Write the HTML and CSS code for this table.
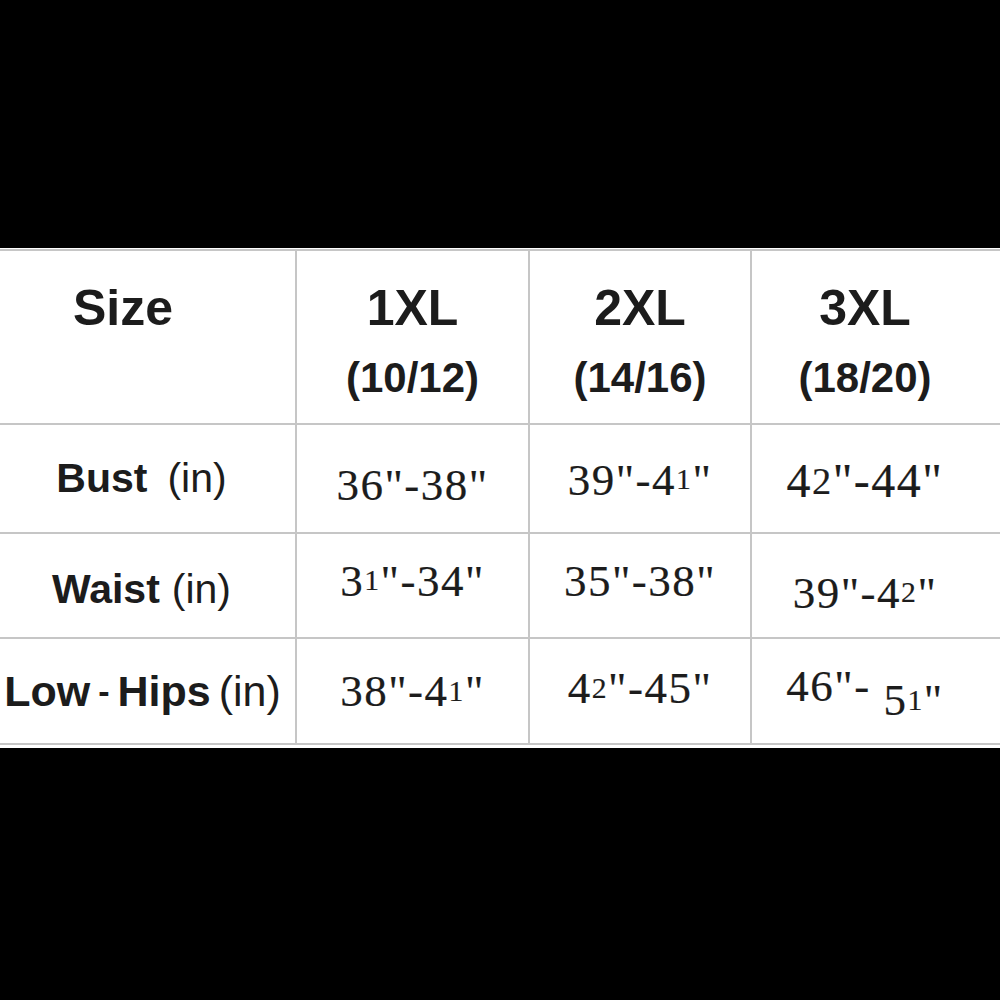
FILE: index.html
```html
<!DOCTYPE html>
<html>
<head>
<meta charset="utf-8">
<link rel="stylesheet" href="styles.css">
</head>
<body>
<div class="chart">
  <div class="cell head size-head"><span class="h1 size">Size</span></div>
  <div class="cell head"><span class="h1">1XL</span><span class="h2">(10/12)</span></div>
  <div class="cell head c3"><span class="h1">2XL</span><span class="h2">(14/16)</span></div>
  <div class="cell head c4"><span class="h1">3XL</span><span class="h2">(18/20)</span></div>

  <div class="cell label"><span class="k">Bust</span><span class="u wide">(in)</span></div>
  <div class="cell num bust">36"-38"</div>
  <div class="cell num bust c3 up">39"-4<span class="o">1</span>"</div>
  <div class="cell num bust c4 big">4<span class="o">2</span>"-44"</div>

  <div class="cell label waist"><span class="k">Waist</span><span class="u">(in)</span></div>
  <div class="cell num waist">3<span class="o">1</span>"-34"</div>
  <div class="cell num waist c3">35"-38"</div>
  <div class="cell num waist c4 down">39"-4<span class="o">2</span>"</div>

  <div class="cell label hips"><span class="k">Low</span><span class="dash">-</span><span class="k">Hips</span><span class="u">(in)</span></div>
  <div class="cell num hips-n">38"-4<span class="o">1</span>"</div>
  <div class="cell num hips-n c3 up">4<span class="o">2</span>"-45"</div>
  <div class="cell num hips-n c4">46"-&nbsp;<span class="lo">5<span class="o">1</span>"</span></div>
</div>
</body>
</html>
```
FILE: styles.css
```css
html, body {
  margin: 0;
  padding: 0;
  background: #000;
}
body {
  width: 1000px;
  height: 1000px;
  overflow: hidden;
  font-family: "Liberation Sans", Arial, sans-serif;
  color: #1c1c1c;
}
.chart {
  margin-top: 248px;
  background: #fff;
  padding: 1px 0 3px 0;
  display: grid;
  grid-template-columns: 297px 233px 222px 248px;
  grid-template-rows: 176px 109px 105px 106px;
}
.cell {
  border-right: 2px solid #c6c6c6;
  border-bottom: 2px solid #c6c6c6;
  display: flex;
  align-items: center;
  justify-content: center;
}
.c4 { border-right: none; padding-right: 22px; }
.head {
  border-top: 2px solid #c6c6c6;
  flex-direction: column;
  justify-content: flex-start;
  padding-top: 29px;
}
.size-head {
  align-items: flex-start;
  padding-left: 73px;
}
.h1 {
  font-weight: bold;
  font-size: 50px;
  line-height: 56px;
  height: 56px;
}
.size { font-size: 50px; }
.h2 {
  font-weight: bold;
  font-size: 42px;
  line-height: 56px;
  margin-top: 14px;
}
.label {
  font-size: 41px;
  gap: 12px;
  padding-right: 12px;
}
.label .k { font-weight: bold; }
.label .u { font-weight: normal; }
.label .wide { margin-left: 8px; }
.waist { padding-top: 8px; }
.hips {
  font-size: 43px;
  padding-right: 10px;
  gap: 8px;
}
.dash { font-weight: bold; font-size: 34px; }
.num {
  font-family: "Liberation Serif", "DejaVu Serif", serif;
  font-size: 45px;
  letter-spacing: 1.5px;
  -webkit-text-stroke: 0.2px #1c1c1c;
  white-space: pre;
}
.num .o {
  font-size: 0.66em;
  vertical-align: 0.18em;
}
.big .o { font-size: 0.8em; vertical-align: 0.1em; }
.num .lo {
  display: inline-block;
  transform: translateY(14px);
}
.bust { padding-top: 12px; }
.bust.up { padding-top: 2px; }
.bust.big { font-size: 48px; padding-top: 4px; }
.num.waist { padding-top: 0; padding-bottom: 10px; }
.num.waist.down { padding-bottom: 0; padding-top: 14px; }
.hips-n { padding-top: 0; }
.hips-n.up { padding-bottom: 6px; }
.hips-n.c4 { padding-bottom: 10px; }
```
